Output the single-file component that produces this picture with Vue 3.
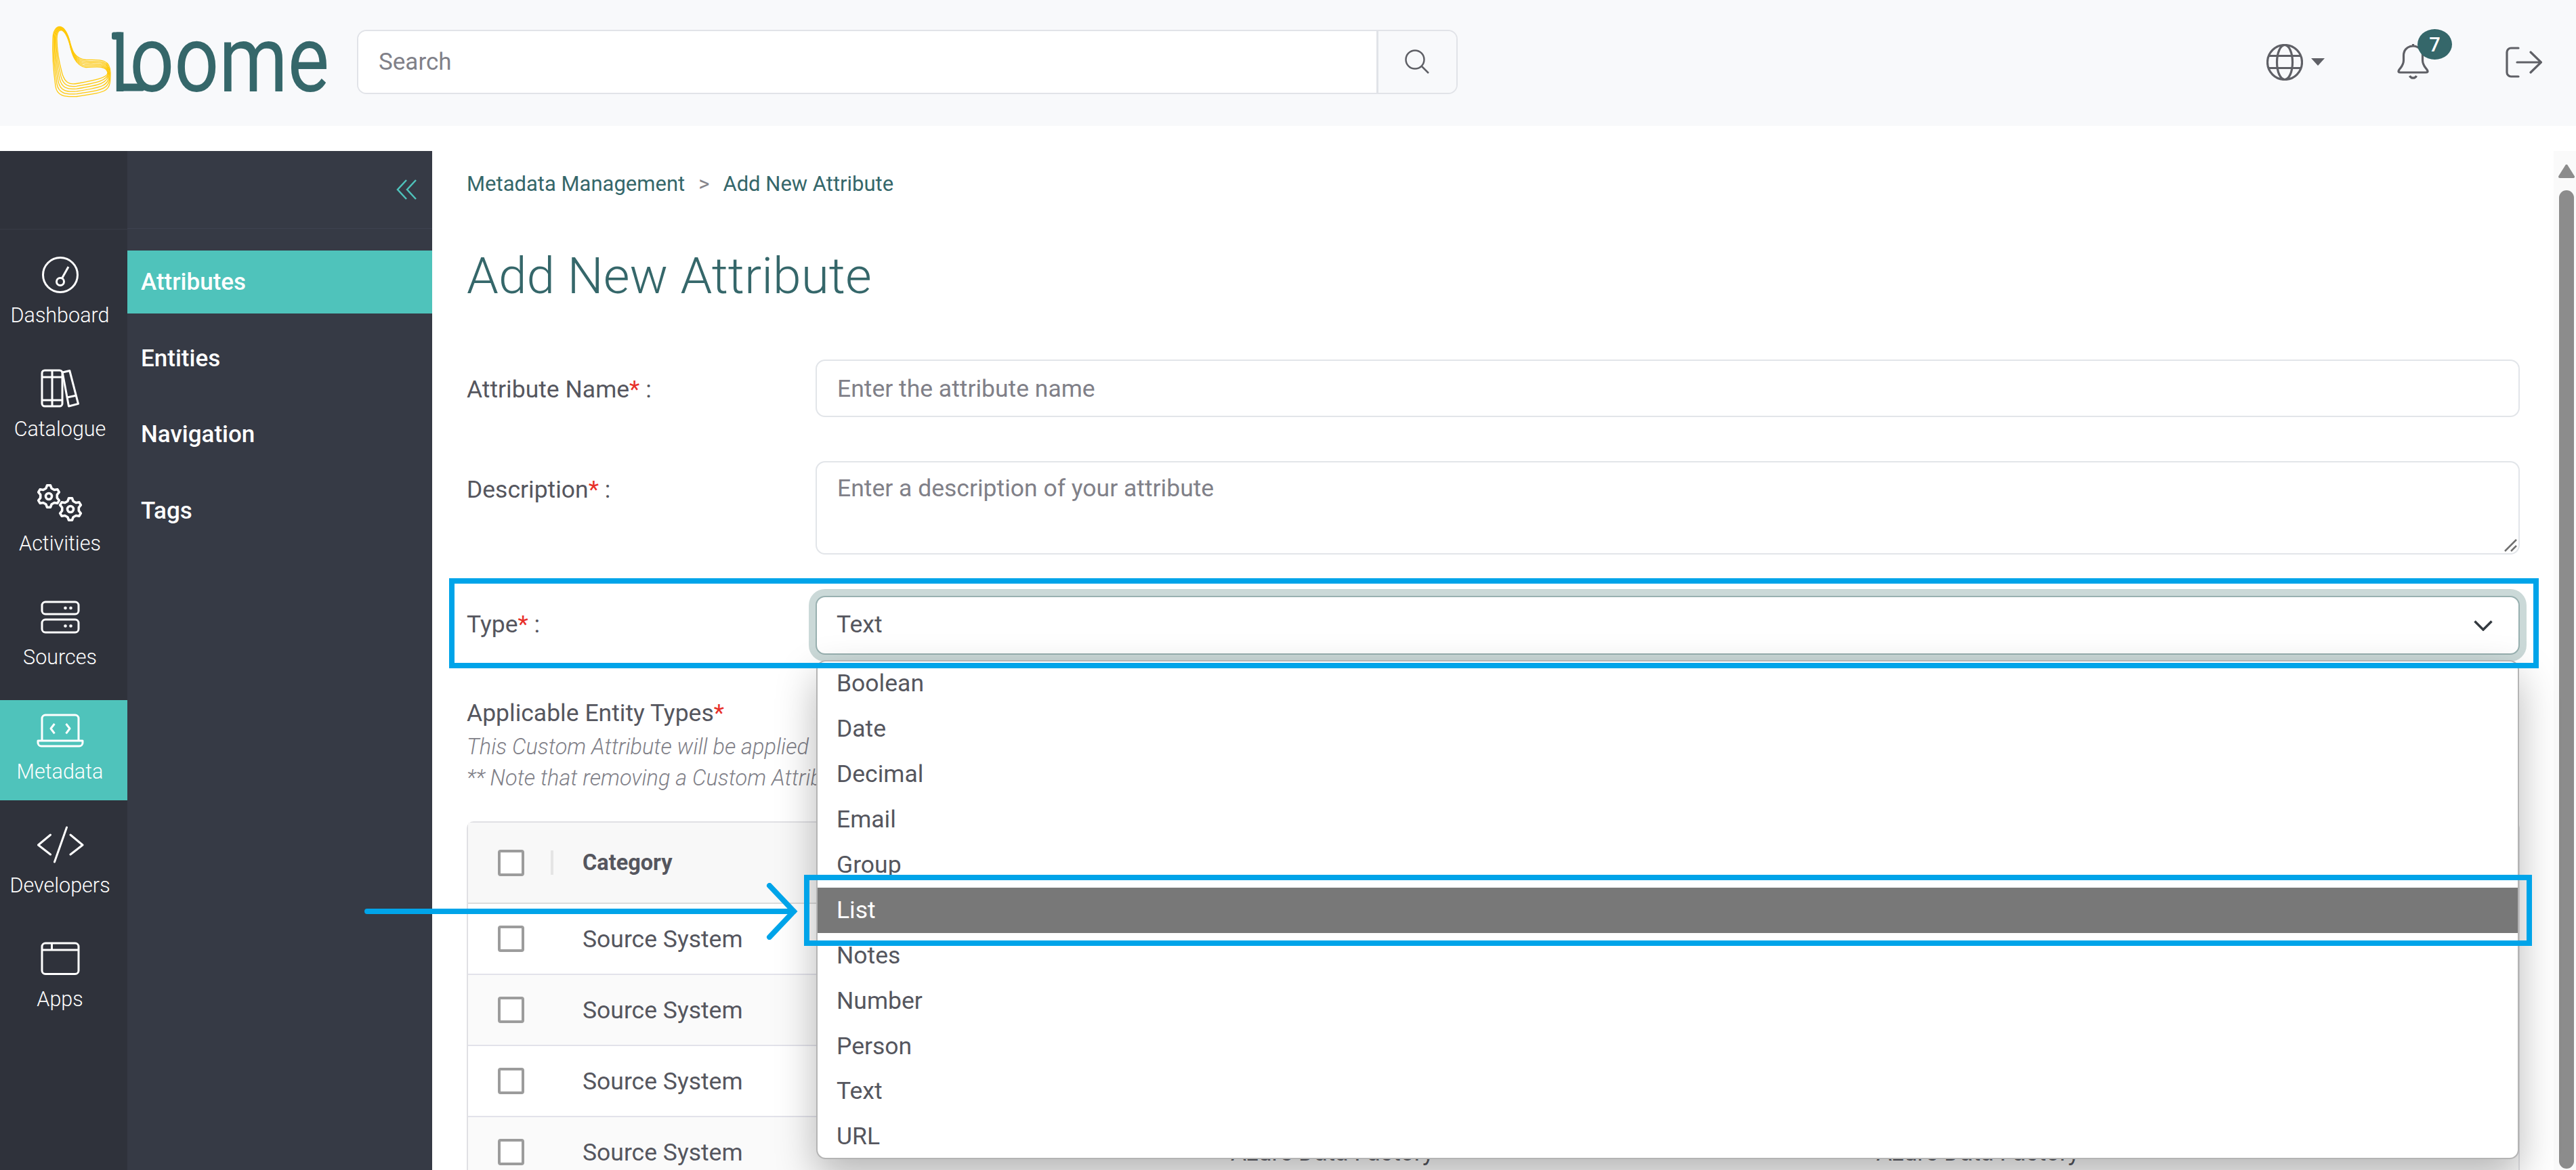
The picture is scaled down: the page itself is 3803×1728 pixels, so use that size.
<script setup>
const railItems = [
  { name: 'dashboard', label: 'Dashboard' },
  { name: 'catalogue', label: 'Catalogue' },
  { name: 'activities', label: 'Activities' },
  { name: 'sources', label: 'Sources' },
  { name: 'metadata', label: 'Metadata', active: true },
  { name: 'developers', label: 'Developers' },
  { name: 'apps', label: 'Apps' }
];

const subItems = ['Attributes', 'Entities', 'Navigation', 'Tags'];

const typeOptions = ['Boolean', 'Date', 'Decimal', 'Email', 'Group', 'List', 'Notes', 'Number', 'Person', 'Text', 'URL'];

const rows = [
  { category: 'Source System' },
  { category: 'Source System' },
  { category: 'Source System' },
  { category: 'Source System', platform: 'Azure Data Factory', type: 'Azure Data Factory' }
];

// logo swirl: blend between the outer and inner outline
const outer = [13, 4, 18, 4, 23, 10, 27, 22, 31, 38, 34, 51, 52, 53, 70, 53, 88, 50, 88, 72, 88, 100, 86, 100, 38, 107, 20, 108, 9, 106, 7, 92, 4, 70, 2, 45, 3, 22, 3, 10, 8, 4, 13, 4];
const inner = [15, 9, 19, 9, 24, 16, 28, 30, 31, 44, 36, 62, 52, 64, 65, 64, 82, 60, 84, 72, 84, 80, 60, 84, 38, 88, 27, 90, 21, 86, 17, 74, 12, 56, 9, 38, 9, 22, 9, 14, 11, 9, 15, 9];

const swirl = Array.from({ length: 6 }, (_, i) => {
  const t = i / 5;
  const p = outer.map((v, k) => (v + (inner[k] - v) * t).toFixed(1));
  let d = `M${p[0]} ${p[1]}`;
  for (let k = 2; k < p.length; k += 6) {
    d += ` C${p[k]} ${p[k + 1]} ${p[k + 2]} ${p[k + 3]} ${p[k + 4]} ${p[k + 5]}`;
  }
  return d + ' Z';
});

const gear = (cx, cy, r1, r2, teeth) => {
  const pts = [];
  const step = (Math.PI * 2) / teeth;
  for (let i = 0; i < teeth; i++) {
    const a = i * step - Math.PI / 2;
    [[-0.32, r2], [-0.14, r1], [0.14, r1], [0.32, r2]].forEach(([o, r]) => {
      const ang = a + o * step;
      pts.push(`${(cx + Math.cos(ang) * r).toFixed(1)} ${(cy + Math.sin(ang) * r).toFixed(1)}`);
    });
  }
  return 'M' + pts.join(' L') + ' Z';
};
const gearOne = gear(18, 20, 16.5, 12.5, 6);
const gearTwo = gear(50, 39, 16.5, 12.5, 6);
</script>

<template>
  <div class="page">
    <header class="topbar">
      <svg class="logo" width="415" height="180" viewBox="0 -33.5 415 180">
        <defs>
          <clipPath id="logo-word-clip">
            <rect x="80" y="12" width="335" height="100" />
          </clipPath>
        </defs>
        <path v-for="(d, i) in swirl" :key="i" :d="d" fill="none" stroke="#ffc90a" stroke-width="1.3" />
        <rect class="logo__bar" x="90" y="12" width="16" height="11" rx="3" />
        <rect class="logo__bar" x="98" y="88" width="40" height="11" rx="3" />
        <g clip-path="url(#logo-word-clip)">
          <text class="logo__word" transform="translate(88 99) scale(0.839 1)">loome</text>
        </g>
      </svg>
      <div class="search">
        <input class="search__input" placeholder="Search" />
        <button class="search__btn">
          <svg width="37" height="37" viewBox="0 0 37 37" fill="none" stroke="#5f6066" stroke-width="2.5">
            <circle cx="15" cy="15" r="13.5" />
            <path d="M25 25 L35 35" />
          </svg>
        </button>
      </div>
      <div class="tools">
        <svg class="icon" width="54" height="54" viewBox="0 0 54 54">
          <circle cx="27" cy="27" r="25.5" />
          <ellipse cx="27" cy="27" rx="11.5" ry="25.5" />
          <path d="M4 17.5 H50 M4 35.5 H50" />
        </svg>
        <span class="caret"></span>
        <div class="bell">
          <svg class="icon" width="47" height="53" viewBox="0 0 47 53">
            <path d="M23.5 3 C14 3 9.5 10 9.5 17 V24 C9.5 31 6 34 3 38 C1 41 2 42 5 42 H42 C45 42 46 41 44 38 C41 34 37.5 31 37.5 24 V17 C37.5 10 32 3 23.5 3 Z M23.5 0 V3 M18.5 47 A5.5 5.5 0 0 0 28.5 47" />
          </svg>
          <span class="bell__badge">7</span>
        </div>
        <svg class="icon exit" width="54" height="46" viewBox="0 0 54 46">
          <path d="M19 2 H8 A6 6 0 0 0 2 8 V38 A6 6 0 0 0 8 44 H19 M17 23 H52 M37 8 L52.5 23 L37 38" stroke-linecap="round" />
        </svg>
      </div>
    </header>

    <div class="layout">
      <nav class="rail">
        <div class="rail__top"></div>
        <ul class="rail__list">
          <li v-for="item in railItems" :key="item.name" class="rail__item" :class="{ 'rail__item--active': item.active }">
            <svg class="rail__icon" width="70" height="60" viewBox="0 0 70 60">
              <template v-if="item.name === 'dashboard'">
                <circle cx="35" cy="30" r="25.5" />
                <circle cx="35" cy="40" r="5.5" />
                <path d="M37.5 35 L47 18" />
              </template>
              <template v-else-if="item.name === 'catalogue'">
                <rect x="8" y="3" width="30" height="53" rx="4" />
                <path d="M23 3 V56 M8 13 H38 M8 47 H38" />
                <path d="M38.2 6 L48.8 3.5 L61.5 52.4 L47.5 56 Z M45 43 L59 40" />
              </template>
              <template v-else-if="item.name === 'activities'">
                <path class="gear" :d="gearOne" />
                <circle class="gear" cx="18" cy="20" r="4.5" />
                <path class="gear" :d="gearTwo" />
                <circle class="gear" cx="50" cy="39" r="4.5" />
              </template>
              <template v-else-if="item.name === 'sources'">
                <rect x="8" y="8" width="54" height="18" rx="5" />
                <rect x="8" y="34" width="54" height="19" rx="5" />
                <circle class="dot" cx="42.5" cy="17" r="2.3" />
                <circle class="dot" cx="50.5" cy="17" r="2.3" />
                <circle class="dot" cx="42.5" cy="43.5" r="2.3" />
                <circle class="dot" cx="50.5" cy="43.5" r="2.3" />
              </template>
              <template v-else-if="item.name === 'metadata'">
                <path d="M8 43 V11 A5 5 0 0 1 13 6 H57 A5 5 0 0 1 62 11 V43" />
                <path d="M2 44 H68 V47 A5 5 0 0 1 63 52 H7 A5 5 0 0 1 2 47 Z" />
                <path d="M26.5 19 L21 26 L26.5 33.4 M43.5 19 L49 26 L43.5 33.4" />
              </template>
              <template v-else-if="item.name === 'developers'">
                <path d="M20.5 15 L2.5 30 L20.5 44 M44.5 4 L26.5 55 M50 15 L68 30 L50 44" stroke-linecap="round" />
              </template>
              <template v-else>
                <rect x="8" y="7" width="54" height="45.5" rx="5" />
                <path d="M8 17 H62 M22.5 7 V17" />
              </template>
            </svg>
            <span class="rail__label">{{ item.label }}</span>
          </li>
        </ul>
      </nav>

      <nav class="subnav">
        <div class="subnav__top">
          <svg width="30" height="30" viewBox="0 0 30 30" fill="none" stroke="#4fc3bb" stroke-width="2.5">
            <path d="M15 1 L2 15 L15 29 M29 1 L16 15 L29 29" />
          </svg>
        </div>
        <ul class="subnav__list">
          <li v-for="(item, i) in subItems" :key="item" class="subnav__item" :class="{ 'subnav__item--active': i === 0 }">{{ item }}</li>
        </ul>
      </nav>

      <main class="content">
        <div class="crumbs">
          <span>Metadata Management</span>
          <span class="crumbs__sep">&gt;</span>
          <span>Add New Attribute</span>
        </div>
        <h1 class="title">Add New Attribute</h1>

        <div class="field">
          <label class="field__label">Attribute Name<em>*</em> :</label>
          <input class="control" placeholder="Enter the attribute name" />
        </div>
        <div class="field field--desc">
          <label class="field__label">Description<em>*</em> :</label>
          <div class="desc">
            <textarea class="control control--area" placeholder="Enter a description of your attribute"></textarea>
            <svg class="desc__grip" width="20" height="20" viewBox="0 0 20 20" stroke="#707070" stroke-width="2.5">
              <path d="M1 18 L18 1 M10 18 L18 10" />
            </svg>
          </div>
        </div>
        <div class="field field--type">
          <label class="field__label">Type<em>*</em> :</label>
          <div class="select">
            <span class="select__value">Text</span>
            <svg width="28" height="16" viewBox="0 0 28 16" fill="none" stroke="#343a40" stroke-width="3.5">
              <path d="M1.5 1.5 L14 14 L26.5 1.5" />
            </svg>
            <ul class="options">
              <li v-for="opt in typeOptions" :key="opt" class="options__item" :class="{ 'options__item--hover': opt === 'List' }">{{ opt }}</li>
            </ul>
          </div>
        </div>

        <div class="entity">
          <div class="entity__label">Applicable Entity Types<em>*</em></div>
          <p class="entity__note">This Custom Attribute will be applied</p>
          <p class="entity__note">** Note that removing a Custom Attrib</p>
        </div>

        <div class="table">
          <div class="table__head">
            <span class="check"></span>
            <span class="table__sep"></span>
            <span class="table__category">Category</span>
          </div>
          <div v-for="(row, i) in rows" :key="i" class="table__row" :class="{ 'table__row--alt': i % 2 === 1 }">
            <span class="check"></span>
            <span class="table__cell table__cell--first">{{ row.category }}</span>
            <span class="table__cell">{{ row.platform }}</span>
            <span class="table__cell">{{ row.type }}</span>
          </div>
        </div>
      </main>

      <aside class="scrollbar">
        <svg width="24" height="20" viewBox="0 0 24 20" fill="#8c8c8c" stroke="#8c8c8c" stroke-width="4" stroke-linejoin="round">
          <path d="M12 2 L22 18 H2 Z" />
        </svg>
        <div class="scrollbar__thumb"></div>
      </aside>

      <!-- annotations drawn on top of the screenshot -->
      <div class="mark mark--type"></div>
      <div class="mark mark--list"></div>
      <svg class="mark__arrow" width="640" height="84" viewBox="0 0 640 84" fill="none" stroke="#00a4e9" stroke-width="8" stroke-linecap="round">
        <path d="M4 42 H634 M598 4 L634 42 L598 80" />
      </svg>
    </div>
  </div>
</template>

<style scoped>
.page {
  position: relative;
  width: 3803px;
  height: 1728px;
  overflow: hidden;
  background: #fff;
  font-family: Roboto, 'Liberation Sans', sans-serif;
  color: #55565e;
}

ul {
  list-style: none;
  margin: 0;
  padding: 0;
}

.topbar {
  height: 186px;
  box-sizing: border-box;
  padding: 0 50px 3px 75px;
  display: flex;
  align-items: center;
  background: #f8f9fb;
}

.logo {
  margin-right: 37px;
  flex: none;
}

.logo__word {
  font-family: Roboto, sans-serif;
  font-size: 138px;
  fill: #35676a;
}

.logo__bar {
  fill: #35676a;
}

.search {
  width: 1625px;
  height: 95px;
  box-sizing: border-box;
  display: flex;
  border: 2px solid #e1e3e8;
  border-radius: 14px;
  overflow: hidden;
}

.search__input {
  flex: 1;
  min-width: 0;
  border: 0;
  outline: 0;
  padding: 0 30px;
  font: 400 35px Roboto, sans-serif;
  background: #fff;
}

.search__input::placeholder,
.control::placeholder {
  color: #808088;
  opacity: 1;
}

.search__btn {
  width: 118px;
  border: 0;
  border-left: 3px solid #e1e3e8;
  background: #f8f9fb;
  padding: 0;
  display: flex;
  align-items: center;
  justify-content: center;
}

.tools {
  margin-left: auto;
  display: flex;
  align-items: center;
}

.icon {
  fill: none;
  stroke: #5f6066;
  stroke-width: 3.2;
  display: block;
}

.caret {
  margin: 0 107px 0 12px;
  border-top: 11px solid #5f6066;
  border-left: 10px solid transparent;
  border-right: 10px solid transparent;
}

.bell {
  position: relative;
  margin-right: 113px;
}

.bell__badge {
  position: absolute;
  left: 30px;
  top: -22px;
  width: 51px;
  height: 45px;
  border-radius: 50%;
  background: #35676a;
  color: #fff;
  font-size: 29px;
  font-weight: 500;
  display: flex;
  align-items: center;
  justify-content: center;
}

.layout {
  margin-top: 37px;
  height: 1505px;
  display: flex;
}

.rail {
  width: 188px;
  flex: none;
  background: #2f323b;
  color: #fff;
}

.rail__top {
  height: 115px;
  border-bottom: 1px solid #383b45;
}

.rail__list {
  padding-top: 21px;
  display: flex;
  flex-direction: column;
  gap: 20.4px;
}

.rail__item {
  height: 148px;
  box-sizing: border-box;
  padding: 16px 11px 0 0;
  display: flex;
  flex-direction: column;
  align-items: center;
}

.rail__item--active {
  background: #4fc3bb;
}

.rail__icon {
  display: block;
  fill: none;
  stroke: #fff;
  stroke-width: 3;
  stroke-linejoin: round;
}

.rail__icon .dot {
  fill: #fff;
  stroke: none;
}

.rail__icon .gear {
  stroke-width: 3.6;
}

.rail__label {
  margin-top: 10px;
  font-size: 30.5px;
  font-weight: 300;
  line-height: 40px;
}

.subnav {
  width: 450px;
  flex: none;
  background: #363a45;
  color: #fff;
}

.subnav__top {
  height: 115px;
  box-sizing: border-box;
  padding: 42px 23px 0 0;
  border-bottom: 1px solid #3e4250;
  display: flex;
  justify-content: flex-end;
}

.subnav__list {
  padding-top: 32px;
  display: flex;
  flex-direction: column;
  gap: 19.5px;
}

.subnav__item {
  height: 93px;
  padding-left: 20px;
  display: flex;
  align-items: center;
  font-size: 35px;
  font-weight: 500;
}

.subnav__item--active {
  background: #4fc3bb;
}

.content {
  flex: 1;
  min-width: 0;
  box-sizing: border-box;
  padding: 28px 50px 0 51px;
}

.crumbs {
  height: 40px;
  display: flex;
  align-items: center;
  gap: 20px;
  font-size: 31px;
  color: #35676a;
}

.crumbs__sep {
  color: #85858c;
}

.title {
  margin: 72px 0 0;
  height: 88px;
  font-size: 75px;
  line-height: 88px;
  font-weight: 300;
  color: #35676a;
}

.field {
  margin-top: 80px;
  display: grid;
  grid-template-columns: 515px 1fr;
  font-size: 35.5px;
}

.field--desc {
  margin-top: 62px;
}

.field--type {
  margin-top: 61px;
}

.field__label {
  line-height: 88px;
}

.field--desc .field__label,
.field--type .field__label {
  line-height: 84px;
}

.field__label em,
.entity__label em {
  font-style: normal;
  color: #e8302a;
}

.control {
  display: block;
  width: 100%;
  height: 85px;
  box-sizing: border-box;
  border: 2px solid #e2e5e9;
  border-radius: 14px;
  outline: 0;
  padding: 0 30px;
  font: 400 35.5px Roboto, sans-serif;
}

.control--area {
  height: 138px;
  padding-top: 18px;
  line-height: 40px;
  resize: none;
}

.desc {
  position: relative;
}

.desc__grip {
  position: absolute;
  right: 3px;
  bottom: 3px;
}

.select {
  position: relative;
  height: 87px;
  box-sizing: border-box;
  padding: 0 38px 0 29px;
  display: flex;
  align-items: center;
  justify-content: space-between;
  border: 2px solid #98b0b0;
  border-radius: 14px;
  box-shadow: 0 0 0 10px #cbd9d8;
  background: #fff;
  z-index: 1;
}

.select__value {
  padding-bottom: 4px;
}

.options {
  position: absolute;
  left: -1px;
  top: 93px;
  width: 2514px;
  height: 737px;
  box-sizing: border-box;
  border: 2px solid #b4b4b4;
  border-radius: 14px;
  background: #fff;
  box-shadow: 0 24px 60px rgba(0, 0, 0, 0.28);
}

.options__item {
  height: 66.9px;
  box-sizing: border-box;
  padding: 0 0 2px 28px;
  display: flex;
  align-items: center;
}

.options__item--hover {
  background: #787878;
  color: #fff;
}

.entity {
  margin-top: 68px;
}

.entity__label {
  height: 40px;
  line-height: 36px;
  font-size: 35.5px;
}

.entity__note {
  margin: 0;
  white-space: nowrap;
  font-size: 32.5px;
  line-height: 46px;
  font-style: italic;
  font-weight: 300;
  color: #808088;
}

.entity__label + .entity__note {
  margin-top: 5px;
}

.table {
  margin-top: 41px;
  border: 2px solid #e0e0e4;
  border-bottom: 0;
  border-radius: 10px 10px 0 0;
  font-size: 35.5px;
}

.table__head {
  height: 120px;
  box-sizing: border-box;
  border-bottom: 2px solid #dcdcdc;
  padding-left: 44px;
  display: flex;
  align-items: center;
  background: #f8f8f8;
}

.table__sep {
  width: 4px;
  height: 36px;
  margin: 0 43px 0 39px;
  background: #e5e5e5;
}

.table__category {
  font-size: 32.5px;
  font-weight: 700;
}

.table__row {
  height: 105px;
  box-sizing: border-box;
  border-bottom: 2px solid #e2e2ea;
  padding-left: 44px;
  display: grid;
  grid-template-columns: 39px 1043px 953px 1fr;
  align-items: center;
}

.table__cell--first {
  padding-left: 86px;
}

.table__row--alt {
  background: #fafafa;
}

.check {
  width: 39px;
  height: 39px;
  box-sizing: border-box;
  border: 4px solid #9c9c9c;
  border-radius: 4px;
  background: #fff;
  flex: none;
}

.scrollbar {
  width: 33px;
  flex: none;
  background: #fafafa;
  padding: 20px 2px 0 8px;
  box-sizing: border-box;
  display: flex;
  flex-direction: column;
  gap: 18px;
}

.scrollbar svg {
  flex: none;
  margin-left: -1px;
}

.scrollbar__thumb {
  width: 22px;
  height: 1445px;
  border-radius: 11px;
  background: #8c8c8c;
}

.mark {
  position: absolute;
  box-sizing: border-box;
  border: 8px solid #00a4e9;
  z-index: 5;
}

.mark--type {
  left: 663px;
  top: 854px;
  width: 3085px;
  height: 133px;
}

.mark--list {
  left: 1187px;
  top: 1292px;
  width: 2551px;
  height: 105px;
}

.mark__arrow {
  position: absolute;
  left: 538px;
  top: 1304px;
  z-index: 5;
}
</style>

<style>
html,
body {
  margin: 0;
  background: #fff;
}
</style>
